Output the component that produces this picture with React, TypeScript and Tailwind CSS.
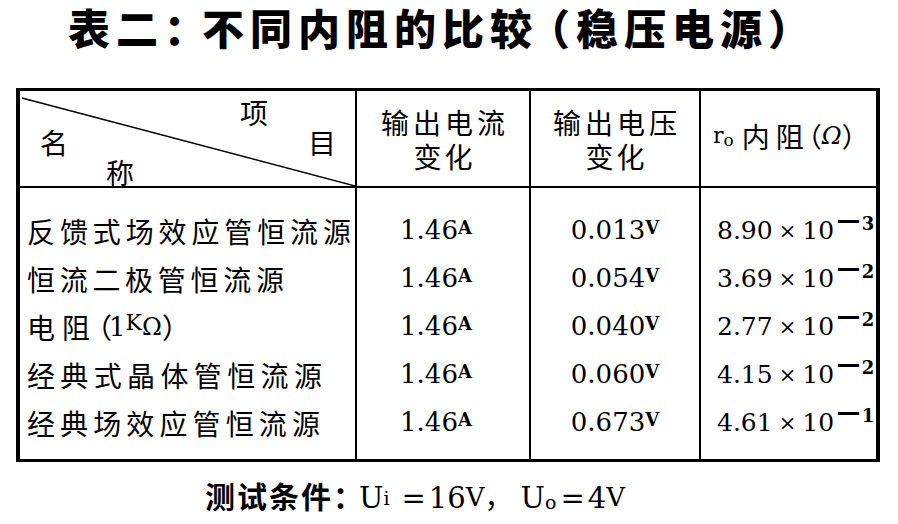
import React from "react";

const cjk = "font-['Noto_Sans_CJK_SC',sans-serif]";
const serif = "font-['DejaVu_Serif',serif]";

function Spread({ text, w }: { text: string; w: string }) {
  return (
    <div className={`flex justify-between ${w} ${cjk} text-[28px] leading-[34px]`}>
      {Array.from(text).map((c, i) => (
        <span key={i}>{c}</span>
      ))}
    </div>
  );
}

type Row = { name: React.ReactNode; cur: string; volt: string; r: string; exp: string };

const rows: Row[] = [
  { name: <Spread text="反馈式场效应管恒流源" w="w-[324px]" />, cur: "1.46", volt: "0.013", r: "8.90", exp: "3" },
  { name: <Spread text="恒流二极管恒流源" w="w-[257px]" />, cur: "1.46", volt: "0.054", r: "3.69", exp: "2" },
  {
    name: (
      <div className="flex items-center whitespace-nowrap leading-[34px]">
        <Spread text="电阻" w="w-[63px]" />
        <span className={`${cjk} text-[28px] -ml-[6px]`}>（</span>
        <span className={`${serif} text-[26px] -ml-[3px]`}>1</span>
        <span className={`${serif} text-[22px] relative -top-[4px]`}>K</span>
        <span className={`${serif} text-[24px]`}>Ω</span>
        <span className={`${cjk} text-[28px]`}>）</span>
      </div>
    ),
    cur: "1.46",
    volt: "0.040",
    r: "2.77",
    exp: "2",
  },
  { name: <Spread text="经典式晶体管恒流源" w="w-[295px]" />, cur: "1.46", volt: "0.060", r: "4.15", exp: "2" },
  { name: <Spread text="经典场效应管恒流源" w="w-[293px]" />, cur: "1.46", volt: "0.673", r: "4.61", exp: "1" },
];

function Unit({ u }: { u: string }) {
  return <span className={`${serif} text-[18px] font-bold relative -top-[5px]`}>{u}</span>;
}

export default function App() {
  return (
    <div className="w-[898px] h-[524px] bg-white text-black overflow-hidden">
      <div className="h-[88px] flex justify-start pl-[68px] pt-[2px]">
        <div className={`${cjk} font-black text-[42px] leading-[50px] tracking-[6px] whitespace-nowrap`}>
          表二<span className="-mr-[10px]">：</span>不同内阻的比较<span className="-ml-[10px]">（</span>稳压电源<span>）</span>
        </div>
      </div>

      <div className="ml-[16px] w-[864px] border-t-[3px] border-l-[4px] border-r-[4px] border-b-[3px] border-black">
        {/* header */}
        <div className="grid grid-cols-[337px_174px_170px_1fr] h-[97px] border-b-2 border-black">
          <div className={`relative border-r-2 border-black ${cjk} text-[28px] leading-[30px] pt-[6px]`}>
            <svg className="absolute inset-0" width="335" height="95" viewBox="0 0 335 95">
              <line x1="2" y1="7" x2="335" y2="95" stroke="#000" strokeWidth="1.4" />
            </svg>
            <div className="relative h-[30px] pl-[220px]">项</div>
            <div className="relative h-[30px] flex justify-between pl-[20px] pr-[19px]">
              <span>名</span>
              <span>目</span>
            </div>
            <div className="relative h-[30px] pl-[86px]">称</div>
          </div>
          <div className="border-r-2 border-black flex flex-col items-center justify-center">
            <Spread text="输出电流" w="w-[124px]" />
            <Spread text="变化" w="w-[59px]" />
          </div>
          <div className="border-r-2 border-black flex flex-col items-center justify-center">
            <Spread text="输出电压" w="w-[124px]" />
            <Spread text="变化" w="w-[59px]" />
          </div>
          <div className="pt-[20px] pl-[12px] whitespace-nowrap leading-[30px] flex items-center h-[70px]">
            <span className={`${serif} text-[22px]`}>r</span>
            <span className={`${serif} text-[17px] relative top-[4px] mr-[8px]`}>o</span>
            <Spread text="内阻" w="w-[62px]" />
            <span className={`${cjk} text-[27px] -ml-[9px]`}>（</span>
            <span className={`${serif} italic text-[24px]`}>Ω</span>
            <span className={`${cjk} text-[27px]`}>）</span>
          </div>
        </div>

        {/* body */}
        <div className="grid grid-cols-[337px_174px_170px_1fr]">
          {rows.map((r, i) => {
            const pad = i === 0 ? "pt-[19px] h-[67px]" : i === rows.length - 1 ? "pb-[12px] h-[60px]" : "h-[48px]";
            return (
              <React.Fragment key={i}>
                <div className={`border-r-2 border-black ${pad} flex items-center pl-[7px] whitespace-nowrap`}>
                  {r.name}
                </div>
                <div className={`border-r-2 border-black ${pad} flex items-center justify-center pr-[14px]`}>
                  <span className={`${serif} text-[26px] leading-[34px]`}>
                    {r.cur}
                    <Unit u="A" />
                  </span>
                </div>
                <div className={`border-r-2 border-black ${pad} flex items-center justify-center`}>
                  <span className={`${serif} text-[26px] leading-[34px]`}>
                    {r.volt}
                    <Unit u="V" />
                  </span>
                </div>
                <div className={`${pad} flex items-center pl-[16px] whitespace-nowrap`}>
                  <span className={`${serif} text-[25px] leading-[34px]`}>
                    {r.r}
                    <span className="text-[21px] mx-[6px] relative -top-[1px]">×</span>
                    10
                    <span className="text-[27px] font-bold relative -top-[9px] inline-block scale-x-125 ml-[3px]">−</span>
                    <span className="text-[18px] font-bold relative -top-[9px] ml-[2px]">{r.exp}</span>
                  </span>
                </div>
              </React.Fragment>
            );
          })}
        </div>
      </div>

      <div className="mt-[15px] flex justify-start pl-[205px] whitespace-nowrap leading-[36px] items-baseline">
        <span className={`${cjk} font-bold text-[30px] tracking-[2px]`}>测试条件：</span>
        <span className={`${serif} text-[29px] -ml-[6px]`}>U</span>
        <span className={`${serif} text-[19px] relative -top-[3px] mr-[12px]`}>i</span>
        <span className={`${serif} text-[29px]`}>=</span>
        <span className={`${serif} text-[29px] ml-[3px]`}>16</span>
        <span className={`${serif} text-[26px] relative -top-[2px]`}>V</span>
        <span className={`${cjk} text-[28px] mr-[8px]`}>，</span>
        <span className={`${serif} text-[29px]`}>U</span>
        <span className={`${serif} text-[19px] relative top-[1px] mr-[4px]`}>o</span>
        <span className={`${serif} text-[29px]`}>=</span>
        <span className={`${serif} text-[29px] ml-[3px]`}>4</span>
        <span className={`${serif} text-[26px] relative -top-[2px]`}>V</span>
      </div>
    </div>
  );
}
